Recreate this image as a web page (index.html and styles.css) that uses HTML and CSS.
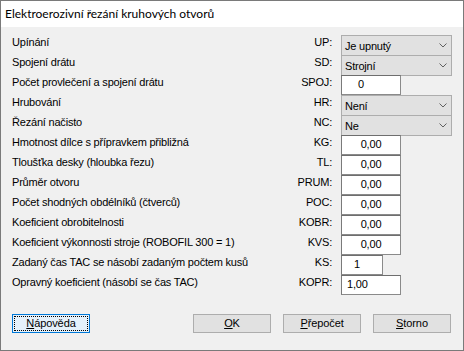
FILE: index.html
```html
<!DOCTYPE html>
<html lang="cs">
<head>
<meta charset="utf-8">
<title>Elektroerozivní řezání kruhových otvorů</title>
<link rel="stylesheet" href="styles.css">
</head>
<body>
<div class="window">
  <div class="titlebar">Elektroerozivní řezání kruhových otvorů</div>
  <div class="client">
    <div class="form">
      <span class="label">Upínání</span><span class="code">UP:</span>
      <div class="combo"><span>Je upnutý</span><svg class="chev" width="8" height="5" viewBox="0 0 8 5"><path d="M0.5 0.5 L4 4 L7.5 0.5" fill="none" stroke="#606060" stroke-width="1"/></svg></div>

      <span class="label">Spojení drátu</span><span class="code">SD:</span>
      <div class="combo"><span>Strojní</span><svg class="chev" width="8" height="5" viewBox="0 0 8 5"><path d="M0.5 0.5 L4 4 L7.5 0.5" fill="none" stroke="#606060" stroke-width="1"/></svg></div>

      <span class="label">Počet provlečení a spojení drátu</span><span class="code">SPOJ:</span>
      <div class="edit spoj">0</div>

      <span class="label">Hrubování</span><span class="code">HR:</span>
      <div class="combo"><span>Není</span><svg class="chev" width="8" height="5" viewBox="0 0 8 5"><path d="M0.5 0.5 L4 4 L7.5 0.5" fill="none" stroke="#606060" stroke-width="1"/></svg></div>

      <span class="label">Řezání načisto</span><span class="code">NC:</span>
      <div class="combo"><span>Ne</span><svg class="chev" width="8" height="5" viewBox="0 0 8 5"><path d="M0.5 0.5 L4 4 L7.5 0.5" fill="none" stroke="#606060" stroke-width="1"/></svg></div>

      <span class="label">Hmotnost dílce s přípravkem přibližná</span><span class="code">KG:</span>
      <div class="edit center">0,00</div>

      <span class="label">Tloušťka desky (hloubka řezu)</span><span class="code">TL:</span>
      <div class="edit center">0,00</div>

      <span class="label">Průměr otvoru</span><span class="code">PRUM:</span>
      <div class="edit center">0,00</div>

      <span class="label">Počet shodných obdélníků (čtverců)</span><span class="code">POC:</span>
      <div class="edit center">0,00</div>

      <span class="label">Koeficient obrobitelnosti</span><span class="code">KOBR:</span>
      <div class="edit center">0,00</div>

      <span class="label">Koeficient výkonnosti stroje (ROBOFIL 300 = 1)</span><span class="code">KVS:</span>
      <div class="edit center">0,00</div>

      <span class="label">Zadaný čas TAC se násobí zadaným počtem kusů</span><span class="code">KS:</span>
      <div class="edit short">1</div>

      <span class="label">Opravný koeficient (násobí se čas TAC)</span><span class="code">KOPR:</span>
      <div class="edit left">1,00</div>
    </div>

    <div class="buttons">
      <button class="btn focused"><u>N</u>ápověda</button>
      <div class="spacer"></div>
      <button class="btn"><u>O</u>K</button>
      <button class="btn"><u>P</u>řepočet</button>
      <button class="btn"><u>S</u>torno</button>
    </div>
  </div>
</div>
</body>
</html>
```

FILE: styles.css
```css
html, body {
  margin: 0;
  padding: 0;
  background: #f0f0f0;
}

.window {
  width: 464px;
  height: 351px;
  box-sizing: border-box;
  border: 1px solid #7a7a7a;
  background: #f0f0f0;
  display: flex;
  flex-direction: column;
  font-family: "Liberation Sans", Arial, sans-serif;
  font-size: 11px;
  letter-spacing: -0.2px;
  color: #000;
}

.titlebar {
  height: 26px;
  background: #ffffff;
  font-family: Lato, "Noto Sans", sans-serif;
  font-size: 12px;
  letter-spacing: 0;
  line-height: 26px;
  padding-left: 4px;
  color: #000;
}

.client {
  flex: 1;
  padding: 8px 11px 0 11px;
  display: flex;
  flex-direction: column;
}

.form {
  display: grid;
  grid-template-columns: 1fr auto 111px;
  grid-auto-rows: 20px;
  column-gap: 0;
}

.label {
  line-height: 14px;
  align-self: start;
  padding-top: 0;
  white-space: nowrap;
}

.code {
  line-height: 14px;
  align-self: start;
  padding-top: 0;
  text-align: right;
  padding-right: 9px;
}

.combo {
  height: 21px;
  box-sizing: border-box;
  background: #e1e1e1;
  border: 1px solid #adadad;
  display: flex;
  align-items: center;
  justify-content: space-between;
  padding: 0 4px 0 3px;
  line-height: 14px;
}

.chev {
  display: block;
}

.edit {
  height: 20px;
  box-sizing: border-box;
  width: 60px;
  background: #ffffff;
  border: 1px solid #8a8a8a;
  border-top-color: #6e6e6e;
  border-left-color: #7a7a7a;
  line-height: 17px;
  justify-self: start;
}

.edit.center {
  text-align: center;
}

.edit.spoj {
  padding-left: 16px;
}

.edit.short {
  width: 42px;
  padding-left: 12px;
}

.edit.left {
  padding-left: 5px;
}

.buttons {
  display: flex;
  gap: 12px;
  margin-top: 19px;
  padding-right: 1px;
}

.spacer {
  flex: 1;
}

.btn {
  width: 78px;
  height: 19px;
  box-sizing: border-box;
  background: #e1e1e1;
  border: 1px solid #adadad;
  font-family: "Liberation Sans", Arial, sans-serif;
  font-size: 11px;
  letter-spacing: -0.1px;
  color: #000;
  padding: 0;
  margin: 0;
  line-height: 15px;
}

.btn u {
  text-decoration-thickness: 1px;
  text-underline-offset: 1px;
}

.btn.focused {
  background: #e5f1fb;
  border-color: #0078d7;
  outline: 1px dotted #000;
  outline-offset: -3px;
}
```
